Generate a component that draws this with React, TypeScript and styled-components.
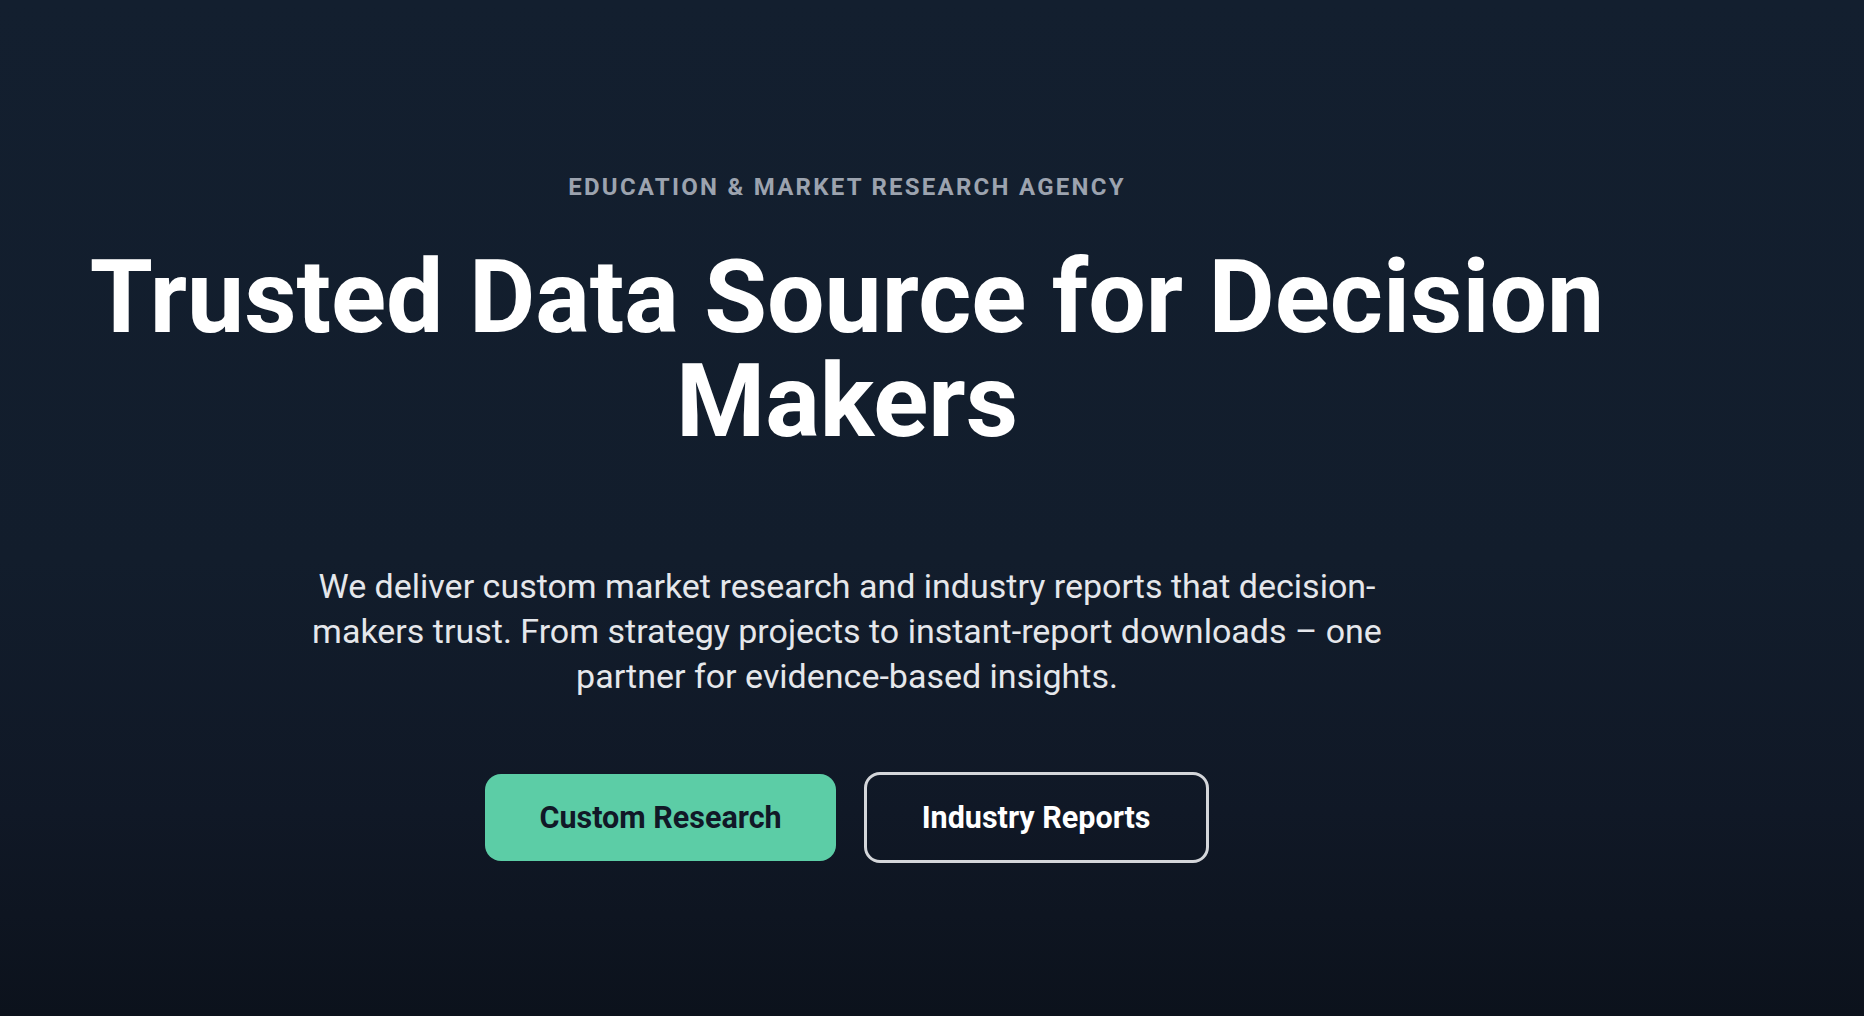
import React from "react";
import styled, { createGlobalStyle } from "styled-components";

const GlobalStyle = createGlobalStyle`
  * {
    box-sizing: border-box;
  }

  html,
  body {
    margin: 0;
    padding: 0;
    background-color: #0f1724;
  }

  body {
    font-family: Roboto, "Liberation Sans", Arial, sans-serif;
    -webkit-font-smoothing: antialiased;
  }
`;

const App: React.FC = () => {
  return (
    <>
      <GlobalStyle />
      <Hero>
        <Content>
          <Eyebrow>Education &amp; Market Research Agency</Eyebrow>
          <Title>Trusted Data Source for Decision Makers</Title>
          <Description>
            We deliver custom market research and industry reports that
            decision-makers trust. From strategy projects to instant-report
            downloads – one partner for evidence-based insights.
          </Description>
          <Actions>
            <PrimaryButton>Custom Research</PrimaryButton>
            <OutlineButton>Industry Reports</OutlineButton>
          </Actions>
        </Content>
      </Hero>
    </>
  );
};

export default App;

const Hero = styled.section`
  min-height: 100vh;
  padding: 169px 170px 120px 0;
  background: linear-gradient(
    180deg,
    #131f2f 0%,
    #121d2c 55%,
    #101826 80%,
    #0c121c 100%
  );
`;

const Content = styled.div`
  display: flex;
  flex-direction: column;
  align-items: center;
  text-align: center;
`;

const Eyebrow = styled.p`
  margin: 0;
  font-size: 24px;
  line-height: 36px;
  font-weight: 700;
  letter-spacing: 0.094em;
  text-transform: uppercase;
  color: #9ca3af;
`;

const Title = styled.h1`
  margin: 40px 0 0;
  font-size: 102px;
  line-height: 104px;
  font-weight: 700;
  color: #ffffff;
`;

const Description = styled.p`
  margin: 111px 0 0;
  max-width: 1130px;
  font-size: 34px;
  line-height: 45px;
  font-weight: 400;
  color: #e5e7eb;
`;

const Actions = styled.div`
  display: flex;
  align-items: center;
  gap: 28px;
  margin-top: 73px;
`;

const PrimaryButton = styled.button`
  padding: 24px 54px;
  font-family: inherit;
  font-size: 30.5px;
  line-height: 39px;
  font-weight: 700;
  color: #111827;
  background-color: #5ccda6;
  border: none;
  border-radius: 16px;
  cursor: pointer;
`;

const OutlineButton = styled.button`
  padding: 23px 55px;
  font-family: inherit;
  font-size: 30.5px;
  line-height: 39px;
  font-weight: 700;
  color: #ffffff;
  background-color: transparent;
  border: 3px solid #d4d6da;
  border-radius: 16px;
  cursor: pointer;
`;
